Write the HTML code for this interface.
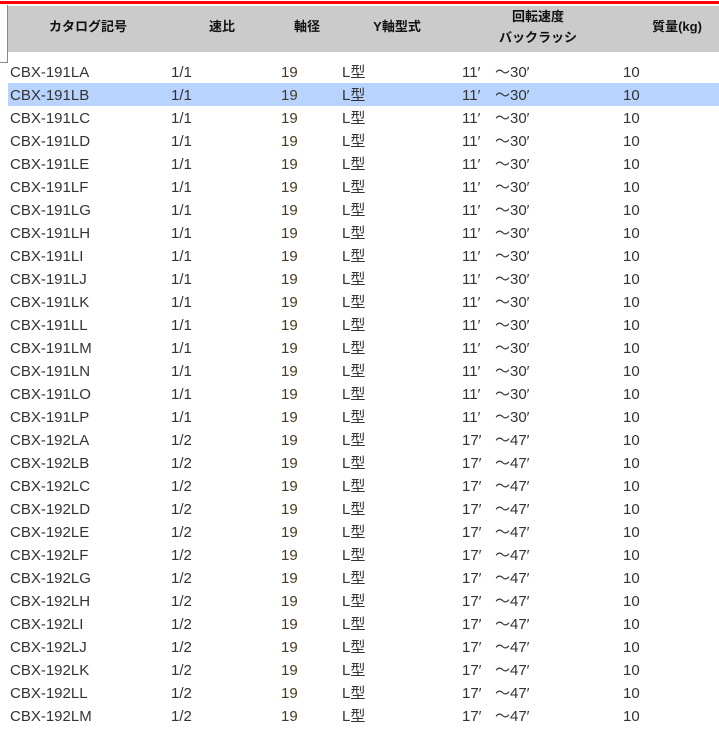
<html><head><style>
body{margin:0;width:719px;height:744px;overflow:hidden;background:#fff;font-family:"Liberation Sans","Noto Sans CJK JP",sans-serif;position:relative}
.red{position:absolute;left:0;top:1px;width:719px;height:3px;background:#f00}
.hd{position:absolute;left:8px;top:6px;width:711px;height:46px;background:#cbcbcb}
.box{position:absolute;left:0;top:5px;width:7px;height:57px;border-right:1px solid #888;border-bottom:1px solid #888}
.h{position:absolute;font-size:13px;font-weight:bold;color:#111;white-space:nowrap;transform:translateX(-50%);line-height:15px}
.r{position:absolute;left:8px;width:711px;height:23px;font-size:15px;color:#333}
.r span{position:absolute;top:5px;white-space:nowrap;line-height:15px;height:15px}
.sel{background:#b9d3ff}
</style></head><body>
<div class="red"></div><div class="hd"></div><div class="box"></div>
<div class="h" style="left:88px;top:19px">カタログ記号</div>
<div class="h" style="left:222px;top:19px">速比</div>
<div class="h" style="left:307px;top:19px">軸径</div>
<div class="h" style="left:397px;top:19px">Y軸型式</div>
<div class="h" style="left:538px;top:9px">回転速度</div>
<div class="h" style="left:538px;top:30px">バックラッシ</div>
<div class="h" style="left:677px;top:19px">質量(kg)</div>
<div id="rows"></div>
<script>
var s='';var L='ABCDEFGHIJKLMNOP';var L2='ABCDEFGHIJKLM';var k=0;
function row(n,ratio,a,b){var y=60+23*k;s+='<div class="r'+(k==1?' sel':'')+'" style="top:'+y+'px"><span style="left:2px">'+n+'</span><span style="left:163px">'+ratio+'</span><span style="left:273px;color:#4a3820">19</span><span style="left:334px">L型</span><span style="left:454px">'+a+'</span><span style="left:487px">'+b+'</span><span style="left:615px">10</span></div>';k++;}
for(var i=0;i<16;i++)row('CBX-191L'+L[i],'1/1','11′','～30′');
for(var i=0;i<13;i++)row('CBX-192L'+L2[i],'1/2','17′','～47′');
document.getElementById('rows').innerHTML=s;
</script>
</body></html>
